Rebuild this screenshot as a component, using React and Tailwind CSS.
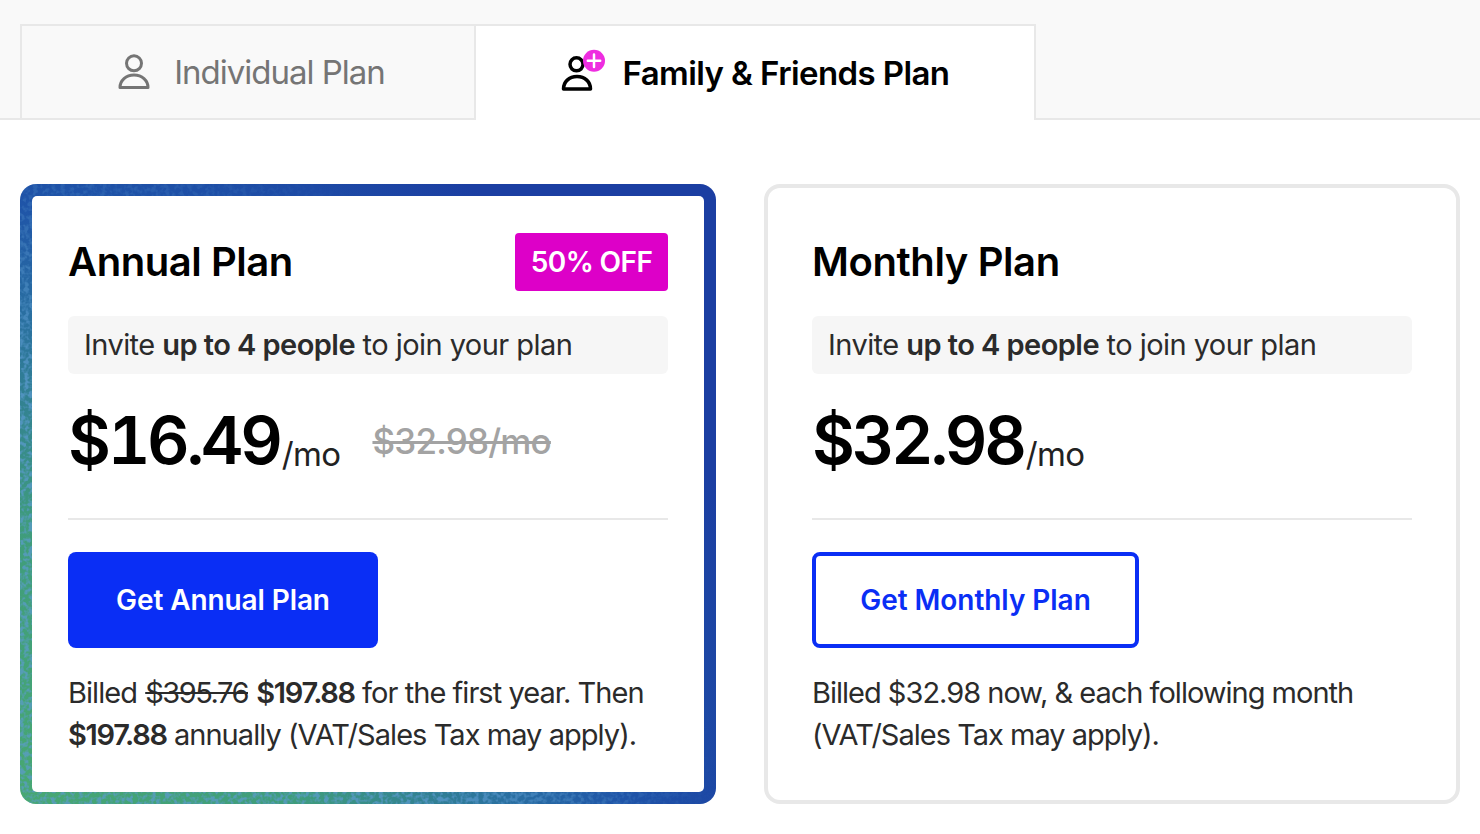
const font = { fontFamily: 'Inter, sans-serif' };

function PersonIcon() {
  return (
    <svg width="34" height="48" viewBox="0 0 34 48" fill="none" className="shrink-0">
      <circle cx="17" cy="15.3" r="7.5" stroke="#757575" strokeWidth="3" />
      <path d="M3 39.5c0-7 6-12.5 14-12.5s14 5.5 14 12.5z" stroke="#757575" strokeWidth="3" strokeLinejoin="round" />
    </svg>
  );
}

function PersonPlusIcon() {
  return (
    <svg width="46" height="48" viewBox="0 0 46 48" fill="none" className="shrink-0">
      <circle cx="15.5" cy="15.3" r="6.5" stroke="#000000" strokeWidth="3.5" />
      <path d="M2.5 40c0-7 5.5-12.5 13.5-12.5S29.5 33 29.5 40z" stroke="#000000" strokeWidth="3.5" strokeLinejoin="round" />
      <circle cx="33" cy="11.7" r="11" fill="#ee2de0" />
      <path d="M33 5.5v12.4M26.8 11.7h12.4" stroke="#ffffff" strokeWidth="2.5" strokeLinecap="round" />
    </svg>
  );
}

function Info() {
  return (
    <div className="mt-[25px] flex h-[58px] items-center rounded-md bg-[#f6f6f6] px-4 text-[29px] tracking-[-0.55px] text-[#2b2b2b]">
      <span>
        Invite <b className="font-semibold">up to 4 people</b> to join your plan
      </span>
    </div>
  );
}

function Price({ value, old }) {
  return (
    <div className="mt-[26px] flex h-[80px] items-end">
      <span className="text-[66px] leading-[80px] font-semibold tracking-[-3.3px] text-black tabular-nums">{value}</span>
      <span className="mb-[6px] ml-[2px] text-[33px] leading-[40px] tracking-[-0.6px] text-[#222222]">/mo</span>
      {old && (
        <span className="mb-[17px] ml-[32px] text-[35px] leading-[44px] font-medium tracking-[-0.8px] text-[#a3a3a3] line-through">
          {old}
        </span>
      )}
    </div>
  );
}

function Bold({ children }) {
  return <b className="font-semibold tracking-[-1.3px]">{children}</b>;
}

export default function App() {
  return (
    <div className="h-[834px] w-[1480px] overflow-hidden bg-white" style={font}>
      <div className="flex h-[120px] items-end border-b-2 border-[#e8e8e8] bg-[#f9f9f9] pl-5">
        <div className="-mb-[2px] flex h-[96px] w-[456px] items-center justify-center gap-[23px] border-2 border-[#e8e8e8] bg-[#f9f9f9] pl-[6px]">
          <PersonIcon />
          <span className="pt-[1px] text-[33px] tracking-[-1px] text-[#757575]">Individual Plan</span>
        </div>
        <div className="-mb-[2px] flex h-[96px] w-[560px] items-center justify-center gap-[16px] border-t-2 border-r-2 border-[#e8e8e8] bg-white">
          <PersonPlusIcon />
          <span className="pt-[1px] text-[33px] font-semibold tracking-[-0.6px] text-black">Family &amp; Friends Plan</span>
        </div>
      </div>

      <div className="flex gap-[48px] px-5 pt-[64px]">
        <div className="relative h-[620px] w-[696px] overflow-hidden rounded-2xl bg-[radial-gradient(circle_at_0%_100%,#48a872_0%,#3f9c7c_30%,#2a70a0_52%,#1f55a8_64%,#1b3ea2_82%)] p-3">
          {/* speckled texture of the border, fades out toward the navy side */}
          <svg
            className="absolute inset-0 h-full w-full opacity-70 [mask-image:radial-gradient(circle_at_0%_100%,#000_45%,transparent_75%)]"
            aria-hidden="true"
          >
            <filter id="speckle">
              <feTurbulence type="fractalNoise" baseFrequency="0.22" numOctaves="2" seed="4" />
              <feColorMatrix
                type="matrix"
                values="0 0 0 0 0.11  0 0 0 0 0.33  0 0 0 0 0.64  4 0 0 0 -1.7"
              />
            </filter>
            <rect width="100%" height="100%" filter="url(#speckle)" />
          </svg>
          <div className="relative h-full rounded-[5px] bg-white px-9 pt-[37px]">
            <div className="flex h-[58px] items-center justify-between">
              <h2 className="text-[40px] font-semibold tracking-[-0.45px] text-black">Annual Plan</h2>
              <span className="flex h-[58px] w-[153px] items-center justify-center rounded-[4px] bg-[#dd00c8] text-[28px] font-semibold tracking-[-0.6px] text-white">
                50% OFF
              </span>
            </div>
            <Info />
            <Price value="$16.49" old="$32.98/mo" />
            <div className="mt-[38px] h-[2px] bg-[#e8e8e8]" />
            <button className="mt-[32px] h-[96px] w-[310px] rounded-lg bg-[#0a2ef5] text-[28px] font-semibold tracking-[-0.1px] text-white">
              Get Annual Plan
            </button>
            <p className="mt-[24px] text-[29px] leading-[42px] tracking-[-0.95px] text-[#2b2b2b]">
              Billed <s className="mx-[1px] tracking-[-1.5px]">$395.76</s> <Bold>$197.88</Bold> for the first year. Then
              <br />
              <Bold>$197.88</Bold> annually (VAT/Sales Tax may apply).
            </p>
          </div>
        </div>

        <div className="h-[620px] w-[696px] rounded-2xl border-4 border-[#e8e8e8] bg-white px-[44px] pt-[45px]">
          <div className="flex h-[58px] items-center">
            <h2 className="text-[40px] font-semibold tracking-[-0.4px] text-black">Monthly Plan</h2>
          </div>
          <Info />
          <Price value="$32.98" />
          <div className="mt-[38px] h-[2px] bg-[#e8e8e8]" />
          <button className="mt-[32px] h-[96px] w-[327px] rounded-lg border-4 border-[#0a2ef5] bg-white text-[28px] font-semibold tracking-[-0.05px] text-[#0a2ef5]">
            Get Monthly Plan
          </button>
          <p className="mt-[24px] text-[29px] leading-[42px] tracking-[-1px] text-[#2b2b2b]">
            Billed $32.98 now, &amp; each following month
            <br />
            (VAT/Sales Tax may apply).
          </p>
        </div>
      </div>
    </div>
  );
}
